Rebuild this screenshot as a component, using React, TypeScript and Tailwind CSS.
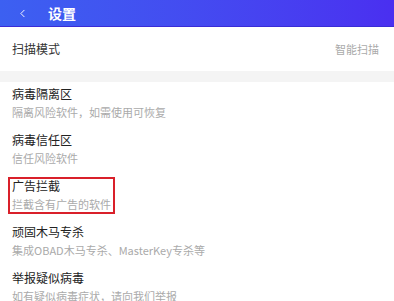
import { ChevronLeft } from 'lucide-react'

const ITEMS = [
  { title: '病毒隔离区', sub: '隔离风险软件，如需使用可恢复' },
  { title: '病毒信任区', sub: '信任风险软件' },
  { title: '广告拦截', sub: '拦截含有广告的软件', marked: true },
  { title: '顽固木马专杀', sub: '集成OBAD木马专杀、MasterKey专杀等' },
  { title: '举报疑似病毒', sub: '如有疑似病毒症状，请向我们举报' },
]

export default function App() {
  return (
    <div
      className="w-[394px] h-[301px] overflow-hidden bg-white"
      style={{ fontFamily: '"Noto Sans CJK SC", "Noto Sans", sans-serif' }}
    >
      <div className="h-[27px] flex items-center bg-gradient-to-r from-[#3c60f1] to-[#4a2ff0] border-b border-[#3a2cd6]">
        <ChevronLeft className="w-[13px] h-[13px] text-white ml-[16px]" strokeWidth={1.75} />
        <span className="ml-[19px] text-[14px] font-bold text-white leading-none">设置</span>
      </div>

      <div className="h-[44px] flex items-center justify-between px-[12px]">
        <span className="text-[12px] text-[#333]">扫描模式</span>
        <span className="text-[11px] text-[#aaa] mr-[3px]">智能扫描</span>
      </div>

      <div className="h-[11px] bg-[#f4f4f4]" />

      <div>
        {ITEMS.map((item) => (
          <div key={item.title} className="relative h-[46px] px-[12px] pt-[4px]">
            <div className="text-[12px] leading-[16px] text-[#222]">{item.title}</div>
            <div className="mt-[2px] text-[11px] leading-[16px] text-[#aaa] whitespace-nowrap">{item.sub}</div>
            {item.marked && (
              <div className="absolute left-[8px] top-[3px] w-[107px] h-[37px] border-2 border-[#d9202a]" />
            )}
          </div>
        ))}
      </div>
    </div>
  )
}
